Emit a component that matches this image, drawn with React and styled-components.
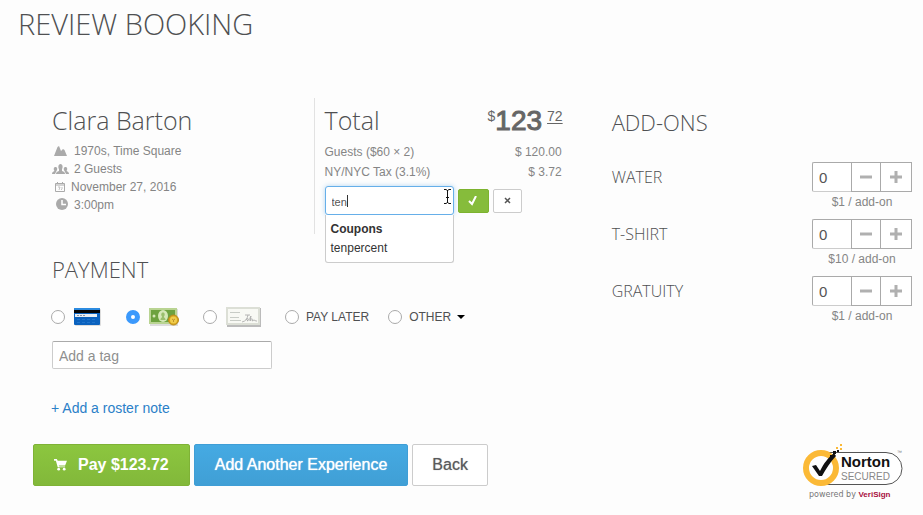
import React, { useState } from 'react';
import styled, { createGlobalStyle } from 'styled-components';

const GlobalStyle = createGlobalStyle`
  * {
    box-sizing: border-box;
  }

  body {
    margin: 0;
    background: #fdfdfd;
    color: #4f5052;
    font-family: "Liberation Sans", Arial, sans-serif;
    font-size: 13px;
  }

  button,
  input {
    font-family: inherit;
  }
`;

const Page = styled.div`
  padding: 0 11px 0 18px;
`;

const PageTitle = styled.h1`
  margin: 0;
  padding: 4px 0 54px;
  font-family: "Open Sans", sans-serif;
  font-size: 29px;
  font-weight: 300;
  line-height: 40px;
`;

const Columns = styled.main`
  display: grid;
  grid-template-columns: 17fr 10fr;
  column-gap: 49px;
  padding-left: 34px;
`;

const Heading = styled.h2`
  margin: 0;
  font-family: "Open Sans", sans-serif;
  font-size: ${({ $small }) => ($small ? '22px' : '25px')};
  font-weight: 300;
  line-height: 32px;
`;

const Summary = styled.div`
  display: grid;
  grid-template-columns: 21fr 20fr;
  min-height: 136px;
`;

const Guest = styled.section`
  padding-top: 6px;
`;

const Details = styled.ul`
  margin: 6px 0 0;
  padding: 0;
  list-style: none;
  color: #858585;
`;

const Detail = styled.li`
  display: flex;
  align-items: center;
  gap: ${({ $tight }) => ($tight ? '2px' : '5px')};
  height: 18px;
  font-size: 12px;

  svg {
    flex: none;
  }
`;

const Totals = styled.section`
  padding: 6px 0 0 10px;
  border-left: 1px solid #e2e2e2;
`;

const TotalHead = styled.div`
  display: flex;
  justify-content: space-between;
  height: 38px;
`;

const Amount = styled.p`
  display: flex;
  align-items: flex-start;
  margin: 0;
  color: #666;
  font-size: 28px;
  line-height: 34px;

  strong {
    font-weight: 400;
    -webkit-text-stroke: 1px #666;
  }

  sup {
    font-size: 14px;
    line-height: 24px;
  }

  u {
    margin-left: 5px;
    text-underline-offset: 2px;
  }
`;

const Line = styled.div`
  display: flex;
  justify-content: space-between;
  padding-right: 1px;
  color: #858585;
  font-size: 12px;
  line-height: 20px;
`;

const CouponForm = styled.form`
  display: flex;
  align-items: center;
  gap: 4px;
  margin-top: 4px;
`;

const Combo = styled.div`
  position: relative;
  width: 129px;
`;

const CouponInput = styled.input`
  display: block;
  width: 100%;
  height: 29px;
  padding: 2px 6px 0;
  border: 1px solid #66afe9;
  border-radius: 3px;
  outline: none;
  background: #fff;
  box-shadow: 0 0 5px rgba(102, 175, 233, 0.5);
  color: #555;
  font-size: 11px;
  caret-color: transparent;
`;

const Caret = styled.span`
  position: absolute;
  top: 9px;
  left: 22px;
  width: 1px;
  height: 12px;
  background: #333;
`;

const Pointer = styled.svg`
  position: absolute;
  top: 2px;
  right: 2px;
`;

const Suggestions = styled.div`
  position: absolute;
  top: 29px;
  left: 0;
  width: 100%;
  padding: 5px 5px 4px;
  border: 1px solid #ccc;
  border-top: 0;
  border-radius: 0 0 3px 3px;
  background: #fff;
  color: #333;
  font-size: 12px;
  line-height: 19px;

  strong {
    display: block;
  }
`;

const SmallButton = styled.button`
  display: flex;
  align-items: center;
  justify-content: center;
  width: ${({ $green }) => ($green ? '31px' : '29px')};
  height: 24px;
  padding: 0;
  border: 1px solid ${({ $green }) => ($green ? '#7db32f' : '#ccc')};
  border-radius: 2px;
  background: ${({ $green }) => ($green ? '#86bc3b' : '#fff')};
`;

const Payment = styled.section`
  padding-top: 19px;
`;

const Methods = styled.div`
  display: flex;
  align-items: center;
  gap: 19px;
  height: 20px;
  margin: 22px 0 14px -1px;
`;

const Method = styled.div`
  display: flex;
  align-items: center;
  gap: 6px;
`;

const MethodLabel = styled.label`
  display: flex;
  align-items: center;
  gap: ${({ $text }) => ($text ? '7px' : '9px')};
  padding-right: ${({ $text }) => ($text ? '0' : '5px')};
  font-size: 12px;
  white-space: nowrap;

  svg {
    flex: none;
  }
`;

const Radio = styled.input`
  flex: none;
  width: 14px;
  height: 14px;
  margin: 0;
  border: 1px solid #aaa;
  border-radius: 50%;
  background: #fff;
  appearance: none;

  &:checked {
    border: 5px solid #3b99fc;
  }
`;

const ArrowButton = styled.button`
  display: flex;
  padding: 0;
  border: 0;
  background: none;
`;

const TagInput = styled.input`
  display: block;
  width: 220px;
  height: 28px;
  padding: 2px 6px 0;
  border: 1px solid #ccc;
  border-top-color: #aaa;
  border-radius: 2px;
  background: #fff;
  font-size: 14px;

  &::placeholder {
    color: #8f8f8f;
  }
`;

const NoteLink = styled.a`
  display: inline-block;
  margin: 29px 0 0 -1px;
  color: #2a80c8;
  font-size: 14px;
  line-height: 20px;
  text-decoration: none;
`;

const AddOns = styled.section`
  padding-top: 8px;
`;

const AddOnList = styled.div`
  padding-top: 24px;
`;

const AddOnRow = styled.div`
  display: flex;
  justify-content: space-between;
  height: 57px;
`;

const AddOnName = styled.label`
  font-family: "Open Sans", sans-serif;
  font-size: 16px;
  font-weight: 300;
  line-height: 30px;
`;

const Stepper = styled.div`
  display: grid;
  grid-template-columns: 39px 30px 31px;
  align-content: start;
  width: 100px;
`;

const Quantity = styled.input`
  height: 30px;
  min-width: 0;
  padding: 2px 6px;
  border: 1px solid #aaa;
  border-right: 0;
  border-bottom-color: #ccc;
  border-radius: 2px 0 0 2px;
  background: #fff;
  color: #555;
  font-size: 15px;
`;

const StepButton = styled.button`
  display: flex;
  align-items: center;
  justify-content: center;
  height: 30px;
  padding: 0;
  border: 1px solid #aaa;
  background: #fff;

  & + & {
    border-left: 0;
  }
`;

const Price = styled.small`
  grid-column: 1 / -1;
  color: #858585;
  font-size: 12px;
  line-height: 20px;
  text-align: center;
`;

const Footer = styled.footer`
  display: flex;
  align-items: flex-start;
  justify-content: space-between;
  padding: 26px 8px 0 15px;
`;

const Actions = styled.div`
  display: flex;
  gap: 4px;
`;

const variants = {
  green: 'background: linear-gradient(#8cc63f, #82b83a); border-color: #7fb236; color: #fff; font-weight: 700;',
  blue: 'background: linear-gradient(#45aae3, #409fd5); border-color: #3f9ed6; color: #fff; text-shadow: 0 0 1px #fff;',
  plain: 'padding: 0 19px; background: #fff; border-color: #ccc; color: #58595b; text-shadow: 0 0 1px #999;',
};

const Button = styled.button`
  display: flex;
  align-items: center;
  gap: 11px;
  height: 42px;
  padding: 0 20px;
  border: 1px solid;
  border-radius: 2px;
  font-size: 16px;
  white-space: nowrap;
  ${({ $variant }) => variants[$variant]}
`;

const MountainIcon = () => (
  <svg width="17" height="12" viewBox="0 0 17 12" fill="#aaa">
    <path d="M2 11 5.500 2 7 1l2 5 2-2 1.500 1 2.500 6z" />
  </svg>
);

const GroupIcon = () => (
  <svg width="17" height="12" viewBox="0 0 17 12" fill="#aaa">
    <path d="M4 11c0-2 1-2 3-3V6c-1-1-1-5 1.500-5S11 5 10 6v2c2 1 3 1 3 3z" />
    <path d="M0 11c0-2 1-2 2.500-3C1 6 2 4 3.500 4S6 6 4.500 8L3 11zM17 11c0-2-1-2-2.500-3C16 6 15 4 13.500 4S11 6 12.500 8L14 11z" />
  </svg>
);

const CalendarIcon = () => (
  <svg width="17" height="12" viewBox="0 0 17 12" fill="none" stroke="#aaa">
    <path d="M3.500 2.500h9v8h-9zM3 4h10M5.500 1v2M10.500 1v2" />
    <path d="M6 6h2l-1 3M9 7h2M9 8.500h1" strokeWidth="0.700" />
  </svg>
);

const ClockIcon = () => (
  <svg width="17" height="14" viewBox="0 0 17 14">
    <circle cx="10" cy="6" r="6" fill="#aaa" />
    <path d="M10 2v4.500h4" fill="none" stroke="#fff" strokeWidth="1.500" />
  </svg>
);

const CardArt = () => (
  <svg width="28" height="20" viewBox="0 0 28 20" role="img" aria-label="Credit card">
    <rect x="1" y="2" width="26" height="17" rx="1" fill="#ddd" />
    <rect y="1" width="26" height="17" rx="1" fill="#0b62be" />
    <rect y="1" width="26" height="2" rx="1" fill="#2c8be0" />
    <rect y="3" width="26" height="3" fill="#050505" />
    <rect x="1" y="7" width="22" height="3" fill="#e8eef4" />
    <path d="M3 8.500h9" stroke="#8a94a5" strokeDasharray="2 1" />
    <path d="M3 12.500h20M3 15.500h20" stroke="#1f74cd" strokeDasharray="3 2" />
  </svg>
);

const CashArt = () => (
  <svg width="30" height="20" viewBox="0 0 30 20" role="img" aria-label="Cash">
    <rect x="1" y="2" width="28" height="17" fill="#ddd" />
    <rect y="1" width="28" height="16" fill="#b9d492" />
    <rect x="2" y="3" width="24" height="12" fill="#6da23f" />
    <ellipse cx="14" cy="9" rx="5" ry="6" fill="#d5e8b8" />
    <path d="M11.500 13c0-3 2-2 1.500-3.500-1.500-2-.5-4 1-4s2.500 2 1 4c-.5 1.500 1.500.5 1.500 3.500z" fill="#9abf6d" />
    <circle cx="5" cy="9" r="1.500" fill="#d5e8b8" />
    <circle cx="24.500" cy="13" r="5" fill="#d6a51c" stroke="#b98a1c" />
    <circle cx="24.500" cy="13" r="3.500" fill="#f0cc4b" />
    <path d="m23 12 1.500 1 1.500-1M24.500 13v2" fill="none" stroke="#c0932a" />
  </svg>
);

const CheckArt = () => (
  <svg width="35" height="20" viewBox="0 0 35 20" role="img" aria-label="Check">
    <rect x="1" y="1" width="34" height="19" fill="#bbb" />
    <rect width="34" height="18" fill="#dcdfd6" />
    <rect x="2" y="2" width="30" height="14" fill="#f8f9f4" />
    <path d="M4 5.500h10M4 10.500h9M4 13.500h11" stroke="#c8ccc6" />
    <path d="M16 15c4-1 5-3 6-7M19 8h5m-4 5c2-3 3-1 1 1 3-1 3-4 4-5l-1 5c2-4 3-2 2 0l2-1 2 1h1" fill="none" stroke="#a5a5a5" strokeWidth="0.800" />
  </svg>
);

const CartIcon = () => (
  <svg width="13" height="12" viewBox="0 0 14 13" fill="#fff">
    <path d="M0 0h3l1 2h10l-2 5H5l1 1h6v1H4L2 2H0z" />
    <circle cx="5" cy="11" r="1.500" />
    <circle cx="11" cy="11" r="1.500" />
  </svg>
);

const NortonSeal = () => (
  <svg width="102" height="58" viewBox="0 0 102 58" role="img" aria-label="Norton Secured, powered by VeriSign">
    <path d="M18 8.500h66a16 16 0 0 1 0 32H18" fill="#fff" stroke="#555" />
    <circle cx="19" cy="24" r="15" fill="#fff" stroke="#fbb936" strokeWidth="6" />
    <path d="M10 22l4-1 4 6c4-8 8-13 14-18l2 3c-6 6-10 13-14 20h-3z" fill="#111" />
    <path d="M31 7h3v3h-3zM35 6h2v2h-2zM28 11h3v3h-3z" fill="#111" />
    <path d="M34 3h2v2h-2zM38 4h2v2h-2zM38 0h2v2h-2z" fill="#fbb936" />
    <text x="39" y="23" fontFamily="Liberation Sans, sans-serif" fontSize="15" fontWeight="700" fill="#111">Norton</text>
    <text x="39" y="36" fontFamily="Liberation Sans, sans-serif" fontSize="10" fill="#888">SECURED</text>
    <text x="95" y="10" fontFamily="Liberation Sans, sans-serif" fontSize="5" fill="#777">™</text>
    <text x="7" y="53" fontFamily="DejaVu Sans, sans-serif" fontSize="8" fill="#777">
      powered by <tspan fontFamily="Liberation Sans, sans-serif" fontWeight="700" fill="#a80f3e">VeriSign</tspan>
    </text>
  </svg>
);

const addOns = [
  { id: 'water', name: 'WATER', price: '$1 / add-on' },
  { id: 'tshirt', name: 'T-SHIRT', price: '$10 / add-on' },
  { id: 'gratuity', name: 'GRATUITY', price: '$1 / add-on' },
];

const AddOn = ({ id, name, price }) => {
  const [count, setCount] = useState(0);

  return (
    <AddOnRow>
      <AddOnName htmlFor={id}>{name}</AddOnName>
      <Stepper>
        <Quantity id={id} value={count} onChange={(e) => setCount(Number(e.target.value) || 0)} />
        <StepButton type="button" aria-label={`Less ${name}`} onClick={() => setCount(Math.max(0, count - 1))}>
          <svg width="12" height="12"><path d="M0 6h12" stroke="#b0b0b0" strokeWidth="3" /></svg>
        </StepButton>
        <StepButton type="button" aria-label={`More ${name}`} onClick={() => setCount(count + 1)}>
          <svg width="12" height="12"><path d="M0 6h12M6 0v12" stroke="#b0b0b0" strokeWidth="3" /></svg>
        </StepButton>
        <Price>{price}</Price>
      </Stepper>
    </AddOnRow>
  );
};

const App = () => {
  const [method, setMethod] = useState('cash');
  const [coupon, setCoupon] = useState('ten');

  const radio = (value) => (
    <Radio type="radio" name="method" value={value} checked={method === value} onChange={() => setMethod(value)} />
  );

  return (
    <>
      <GlobalStyle />
      <Page>
        <PageTitle>REVIEW BOOKING</PageTitle>
        <Columns>
          <div>
            <Summary>
              <Guest>
                <Heading>Clara Barton</Heading>
                <Details>
                  <Detail><MountainIcon />1970s, Time Square</Detail>
                  <Detail><GroupIcon />2 Guests</Detail>
                  <Detail $tight><CalendarIcon />November 27, 2016</Detail>
                  <Detail><ClockIcon />3:00pm</Detail>
                </Details>
              </Guest>
              <Totals>
                <TotalHead>
                  <Heading>Total</Heading>
                  <Amount>
                    <sup>$</sup>
                    <strong>123</strong>
                    <sup><u>72</u></sup>
                  </Amount>
                </TotalHead>
                <Line><span>Guests ($60 × 2)</span><span>$ 120.00</span></Line>
                <Line><span>NY/NYC Tax (3.1%)</span><span>$ 3.72</span></Line>
                <CouponForm onSubmit={(e) => e.preventDefault()}>
                  <Combo>
                    <CouponInput aria-label="Coupon" value={coupon} onChange={(e) => setCoupon(e.target.value)} />
                    <Caret />
                    <Pointer width="9" height="17" viewBox="0 0 9 17" fill="none" stroke="#111">
                      <path d="M1 1.500h2l1.500 1L6 1.500h2M4.500 2v13M1 15.500h2l1.500-1 1.500 1h2M3 9.500h3" />
                    </Pointer>
                    <Suggestions>
                      <strong>Coupons</strong>
                      tenpercent
                    </Suggestions>
                  </Combo>
                  <SmallButton $green aria-label="Apply coupon">
                    <svg width="10" height="10"><path d="m1 5 3 3 4-8" fill="none" stroke="#fff" strokeWidth="2" /></svg>
                  </SmallButton>
                  <SmallButton type="button" aria-label="Clear coupon">
                    <svg width="7" height="7"><path d="m1 1 5 5M6 1 1 6" stroke="#555" strokeWidth="1.500" /></svg>
                  </SmallButton>
                </CouponForm>
              </Totals>
            </Summary>

            <Payment>
              <Heading $small>PAYMENT</Heading>
              <Methods>
                <MethodLabel>{radio('card')}<CardArt /></MethodLabel>
                <MethodLabel>{radio('cash')}<CashArt /></MethodLabel>
                <MethodLabel>{radio('check')}<CheckArt /></MethodLabel>
                <MethodLabel $text>{radio('later')}PAY LATER</MethodLabel>
                <Method>
                  <MethodLabel $text>{radio('other')}OTHER</MethodLabel>
                  <ArrowButton type="button" aria-label="Other payment methods">
                    <svg width="8" height="4"><path d="M0 0h8L4 4z" fill="#000" /></svg>
                  </ArrowButton>
                </Method>
              </Methods>
              <TagInput placeholder="Add a tag" aria-label="Add a tag" />
              <NoteLink href="#note">+ Add a roster note</NoteLink>
            </Payment>
          </div>

          <AddOns>
            <Heading $small>ADD-ONS</Heading>
            <AddOnList>
              {addOns.map((item) => <AddOn key={item.id} {...item} />)}
            </AddOnList>
          </AddOns>
        </Columns>

        <Footer>
          <Actions>
            <Button type="button" $variant="green"><CartIcon />Pay $123.72</Button>
            <Button type="button" $variant="blue">Add Another Experience</Button>
            <Button type="button" $variant="plain">Back</Button>
          </Actions>
          <NortonSeal />
        </Footer>
      </Page>
    </>
  );
};

export default App;
